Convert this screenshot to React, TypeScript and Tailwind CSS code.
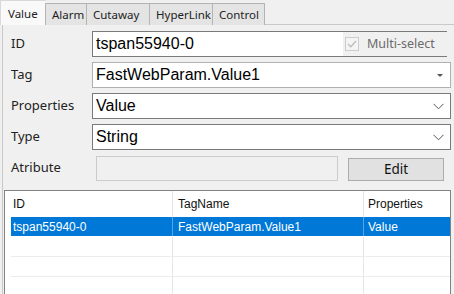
import { useState } from "react";

const ui = { fontFamily: '"Noto Sans", "Open Sans", sans-serif' };
const arial = { fontFamily: '"Liberation Sans", Arial, sans-serif' };

function Tabs() {
  const tabs = ["Value", "Alarm", "Cutaway", "HyperLink", "Control"];
  const widths = ["w-[46px]", "w-[42px]", "w-[64px]", "w-[64px]", "w-[53px]"];
  return (
    <div className="flex items-end h-[25px] text-[11.5px] whitespace-nowrap" style={ui}>
      {tabs.map((t, i) =>
        i === 0 ? (
          <div
            key={t}
            className={`${widths[i]} h-[25px] pl-[7px] pt-[4px] bg-[#f9f9f9] border-l border-t border-[#d9d9d9] text-[#222]`}
          >
            {t}
          </div>
        ) : (
          <div
            key={t}
            className={`${widths[i]} h-[22px] pl-[6px] pt-[2px] bg-[#e4e4e4] border border-b-0 border-[#b4b4b4] -ml-px text-[#222]`}
          >
            {t}
          </div>
        )
      )}
      <div className="flex-1 border-b border-[#c8c8c8]" />
    </div>
  );
}

function Chevron() {
  return (
    <svg width="11" height="7" viewBox="0 0 11 7" className="mr-[6px]">
      <path d="M0.5 0.8 L5.5 5.8 L10.5 0.8" fill="none" stroke="#555" strokeWidth="1" />
    </svg>
  );
}

function Row({ label, children }: { label: string; children: React.ReactNode }) {
  return (
    <div className="flex items-center h-[26px]">
      <div className="w-[89px] pl-[8px] text-[13px] text-[#222]" style={ui}>
        {label}
      </div>
      {children}
    </div>
  );
}

function Form() {
  const [multi] = useState(true);
  return (
    <div className="flex flex-col gap-[5px] pt-[6px] pr-[3px]">
      <Row label="ID">
        <div className="flex flex-1 h-[26px] mr-[4px] border-y border-[#7a7a7a]">
          <div className="flex-1 flex items-center bg-white border-l border-[#7a7a7a] pl-[3px] text-[16px] text-black" style={arial}>
            tspan55940-0
          </div>
          <div className="w-[104px] flex items-center bg-[#f0f0f0] pl-[2px] gap-[8px] whitespace-nowrap">
            <div className="w-[14px] h-[14px] border border-[#cccccc] bg-[#f4f4f4] flex items-center justify-center">
              {multi && (
                <svg width="10" height="8" viewBox="0 0 10 8">
                  <path d="M1 4 L3.8 6.8 L9 1" fill="none" stroke="#bdbdbd" strokeWidth="1.3" />
                </svg>
              )}
            </div>
            <span className="text-[12.5px] text-[#6b6b6b]" style={ui}>
              Multi-select
            </span>
          </div>
        </div>
      </Row>
      <Row label="Tag">
        <div className="flex flex-1 items-center h-[26px] bg-white border border-[#b0b0b0] pl-[3px] text-[16px]" style={arial}>
          <span className="flex-1">FastWebParam.Value1</span>
          <span className="mr-[7px] w-0 h-0 border-x-[3px] border-x-transparent border-t-[3px] border-t-[#555]" />
        </div>
      </Row>
      <Row label="Properties">
        <div className="flex flex-1 items-center h-[26px] bg-white border border-[#7a7a7a] pl-[3px] text-[16px]" style={arial}>
          <span className="flex-1">Value</span>
          <Chevron />
        </div>
      </Row>
      <Row label="Type">
        <div className="flex flex-1 items-center h-[26px] bg-white border border-[#7a7a7a] pl-[3px] text-[16px]" style={arial}>
          <span className="flex-1">String</span>
          <Chevron />
        </div>
      </Row>
      <Row label="Atribute">
        <div className="flex flex-1 items-center gap-[10px] mr-[7px]">
          <div className="w-[242px] ml-[4px] h-[25px] bg-[#f0f0f0] border border-[#cccccc]" />
          <button className="flex-1 h-[23px] bg-[#e1e1e1] border border-[#adadad] text-[13.5px] text-[#111] mt-[2px]" style={ui}>
            Edit
          </button>
        </div>
      </Row>
    </div>
  );
}

function Table() {
  const rows = [
    { id: "tspan55940-0", tag: "FastWebParam.Value1", prop: "Value" },
    { id: "", tag: "", prop: "" },
    { id: "", tag: "", prop: "" },
    { id: "", tag: "", prop: "" },
  ];
  return (
    <div className="mt-[9px] ml-[1px] mr-[3px] flex-1 bg-white border-t border-x border-[#828282] text-[12px] pl-[6px]" style={arial}>
      <div className="flex h-[26px] items-center text-[#111]">
        <div className="w-[162px] pl-[2px] h-full flex items-center border-r border-[#e6e6e6]">ID</div>
        <div className="w-[191px] pl-[5px] h-full flex items-center border-r border-[#e6e6e6]">TagName</div>
        <div className="flex-1 pl-[4px]">Properties</div>
      </div>
      {rows.map((r, i) => (
        <div
          key={i}
          className={`flex h-[19px] items-center ${i === 0 ? "bg-[#0078d7] text-white mb-[1px]" : "border-b border-[#ececec] h-[20px]"}`}
        >
          <div className={`w-[162px] pl-[2px] h-full flex items-center border-r ${i === 0 ? "border-[#5aa3e0]" : "border-[#e6e6e6]"}`}>{r.id}</div>
          <div className={`w-[191px] pl-[5px] h-full flex items-center border-r ${i === 0 ? "border-[#5aa3e0]" : "border-[#e6e6e6]"}`}>{r.tag}</div>
          <div className="flex-1 pl-[4px]">{r.prop}</div>
        </div>
      ))}
    </div>
  );
}

export default function App() {
  return (
    <div className="w-[454px] h-[294px] bg-[#f0f0f0] overflow-hidden flex flex-col">
      <Tabs />
      <div className="flex-1 flex flex-col border-l border-[#c8c8c8] ml-[2px]">
        <Form />
        <Table />
      </div>
    </div>
  );
}
